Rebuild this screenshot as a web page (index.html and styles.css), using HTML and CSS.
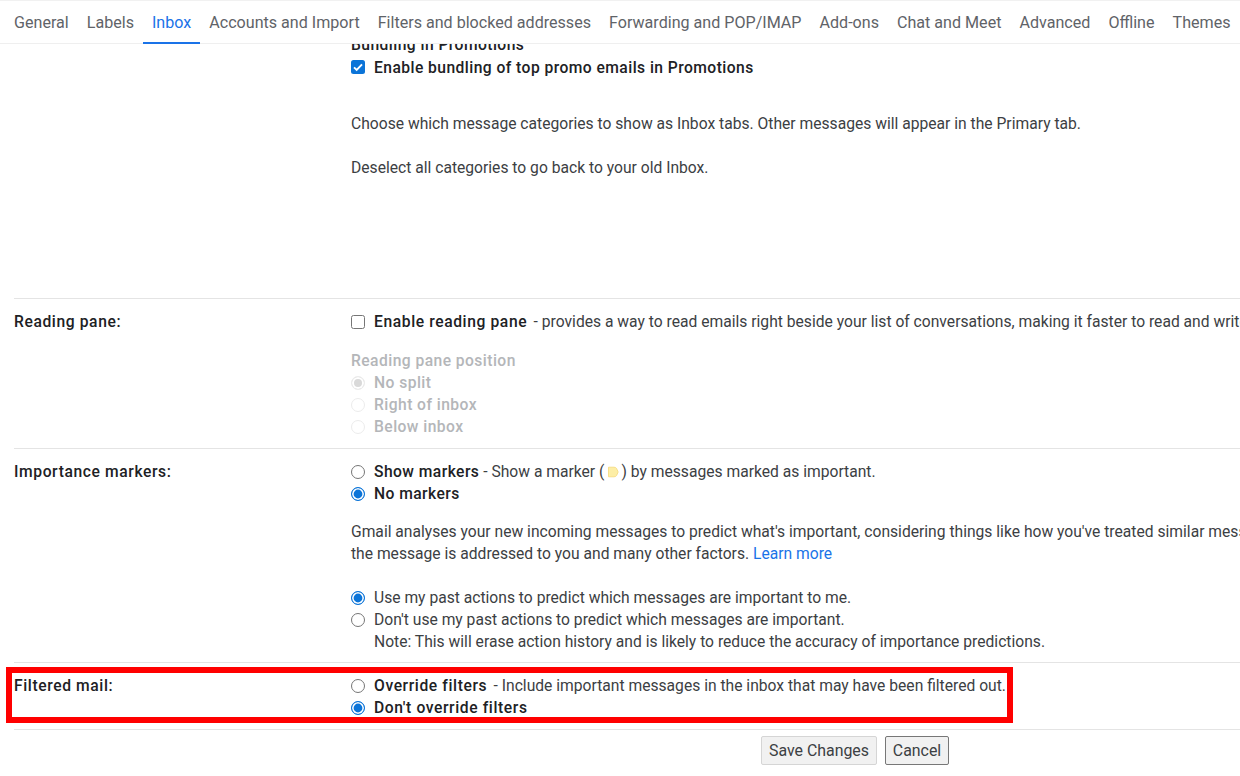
FILE: index.html
```html
<!DOCTYPE html>
<html lang="en">
<head>
<meta charset="utf-8">
<title>Gmail settings - Inbox</title>
<link rel="stylesheet" href="styles.css">
</head>
<body>
<nav class="tabs">
  <a class="tab">General</a>
  <a class="tab">Labels</a>
  <a class="tab active">Inbox</a>
  <a class="tab">Accounts and Import</a>
  <a class="tab">Filters and blocked addresses</a>
  <a class="tab">Forwarding and POP/IMAP</a>
  <a class="tab">Add-ons</a>
  <a class="tab">Chat and Meet</a>
  <a class="tab">Advanced</a>
  <a class="tab">Offline</a>
  <a class="tab">Themes</a>
</nav>
<main class="scroller">
  <section class="row first">
    <div class="label"></div>
    <div class="body">
      <div class="line clipped-head"><b>Bundling in Promotions</b></div>
      <div class="line opt"><span class="check on"><svg viewBox="0 0 14 14" class="tick"><path d="M3 7.3l2.7 2.7L11 4.4" fill="none" stroke="#fff" stroke-width="1.9"/></svg></span><b>Enable bundling of top promo emails in Promotions</b></div>
      <p class="line para-a">Choose which message categories to show as Inbox tabs. Other messages will appear in the Primary tab.</p>
      <p class="line para-b">Deselect all categories to go back to your old Inbox.</p>
    </div>
  </section>
  <section class="row reading">
    <div class="label">Reading pane:</div>
    <div class="body">
      <div class="line opt"><span class="check"></span><span><b>Enable reading pane</b> - provides a way to read emails right beside your list of conversations, making it faster to read and write messages and giving you more context.</span></div>
      <div class="line muted pos-head">Reading pane position</div>
      <div class="line opt muted"><span class="radio off-dis on-dis"></span>No split</div>
      <div class="line opt muted"><span class="radio off-dis"></span>Right of inbox</div>
      <div class="line opt muted"><span class="radio off-dis"></span>Below inbox</div>
    </div>
  </section>
  <section class="row importance">
    <div class="label">Importance markers:</div>
    <div class="body">
      <div class="line opt"><span class="radio"></span><span><b>Show markers</b> - Show a marker (<svg class="marker" viewBox="0 0 14 12"><path d="M2.500 1.200h5.500c1.200 0 2 .4 2.600 1.300l1.600 3.500-1.600 3.500c-.6.9-1.400 1.300-2.600 1.300H2.500z" fill="#fdeea6" stroke="#f5d97a" stroke-width=".8"/></svg>) by messages marked as important.</span></div>
      <div class="line opt"><span class="radio on"></span><b>No markers</b></div>
      <p class="line para-c">Gmail analyses your new incoming messages to predict what's important, considering things like how you've treated similar messages in the past, how directly</p>
      <p class="line">the message is addressed to you and many other factors. <a class="link">Learn more</a></p>
      <div class="line opt para-d"><span class="radio on"></span>Use my past actions to predict which messages are important to me.</div>
      <div class="line opt"><span class="radio"></span>Don't use my past actions to predict which messages are important.</div>
      <div class="line note">Note: This will erase action history and is likely to reduce the accuracy of importance predictions.</div>
    </div>
  </section>
  <section class="row filtered">
    <div class="label">Filtered mail:</div>
    <div class="body">
      <div class="line opt"><span class="radio"></span><span><b>Override filters</b> - Include important messages in the inbox that may have been filtered out.</span></div>
      <div class="line opt"><span class="radio on"></span><b>Don't override filters</b></div>
    </div>
  </section>
  <footer class="actions">
    <button class="btn">Save Changes</button>
    <button class="btn focus">Cancel</button>
  </footer>
</main>
<div class="highlight"></div>
</body>
</html>
```

FILE: styles.css
```css
* { box-sizing: border-box; }
html, body { margin: 0; height: 100%; overflow: hidden; background: #fff; }
body {
  position: relative;
  display: flex;
  flex-direction: column;
  font-family: Roboto, "Liberation Sans", sans-serif;
  font-size: 15.65px;
  line-height: 24px;
  color: #3c4043;
}
.tabs {
  flex: none;
  height: 44px;
  display: flex;
  gap: 18px;
  padding: 0 0 0 14px;
  background: #fff;
  border-top: 1px solid #f1f1f1;
  border-bottom: 1px solid #efefef;
  position: relative;
  z-index: 1;
  white-space: nowrap;
}
.tab {
  position: relative;
  color: #5f6368;
  line-height: 43px;
  font-size: 16.1px;
}
.tab.active { color: #1a73e8; }
.tab.active::after {
  content: "";
  position: absolute;
  left: -9px;
  right: -9px;
  bottom: -1px;
  height: 2px;
  background: #1a73e8;
}
.scroller { flex: 1; min-height: 0; overflow: hidden; margin-left: 14px; }
.row {
  display: grid;
  grid-template-columns: 337px 1000px;
  border-bottom: 1px solid #e4e4e4;
  padding-top: 11px;
  white-space: nowrap;
}
.label { font-weight: 500; color: #202124; letter-spacing: .6px; }
.line { margin: 0; height: 22px; }
b { font-weight: 500; color: #202124; letter-spacing: .44px; }
.reading b, .filtered b { letter-spacing: .6px; margin-right: 2.5px; }
.opt { display: flex; align-items: flex-start; }
.first { margin-top: -11px; height: 266px; padding-top: 0; }
.first .opt { margin-top: 1px; }
.first .check { margin-top: 4px; }
.para-a { margin-top: 34px; }
.para-b { margin-top: 22px; }
.reading { height: 150px; }
.pos-head { margin-top: 17px; }
.muted { color: #b4b6b9; font-weight: 500; letter-spacing: .44px; }
.importance { height: 214px; }
.para-c { margin-top: 16px; }
.para-d { margin-top: 22px; }
.note { padding-left: 23px; }
.filtered { height: 67px; }
.link { color: #1a73e8; }
.check, .radio {
  flex: none;
  display: inline-block;
  width: 14px;
  height: 14px;
  margin: 5px 9px 0 0;
  background: #fff;
}
.check { border: 1.4px solid #767676; border-radius: 2.5px; }
.check.on { background: #0b74d8; border: 0; }
.tick { display: block; width: 14px; height: 14px; }
.radio { border: 1.4px solid #767676; border-radius: 50%; }
.radio.on { border: 1.4px solid #0b74d8; box-shadow: inset 0 0 0 1.6px #fff; background: #0b74d8; }
.radio.off-dis { border-color: #ececec; }
.radio.on-dis { background: #d9d9d9; box-shadow: inset 0 0 0 2px #fff; }
.marker { width: 14px; height: 12px; vertical-align: -1px; margin: 0 1px 0 2px; }
.actions { display: flex; gap: 8px; padding: 6px 0 0 747px; }
.btn {
  font: inherit;
  font-size: 15.9px;
  height: 29px;
  width: 116px;
  padding: 0;
  color: #3c4043;
  background: #f1f1f1;
  border: 1px solid #d5d5d5;
  border-radius: 2px;
}
.btn.focus { border: 1px solid #777; width: 64px; }
.highlight {
  position: absolute;
  left: 6px;
  top: 667px;
  width: 1007px;
  height: 56px;
  border: 6px solid #ff0000;
  pointer-events: none;
}
```
